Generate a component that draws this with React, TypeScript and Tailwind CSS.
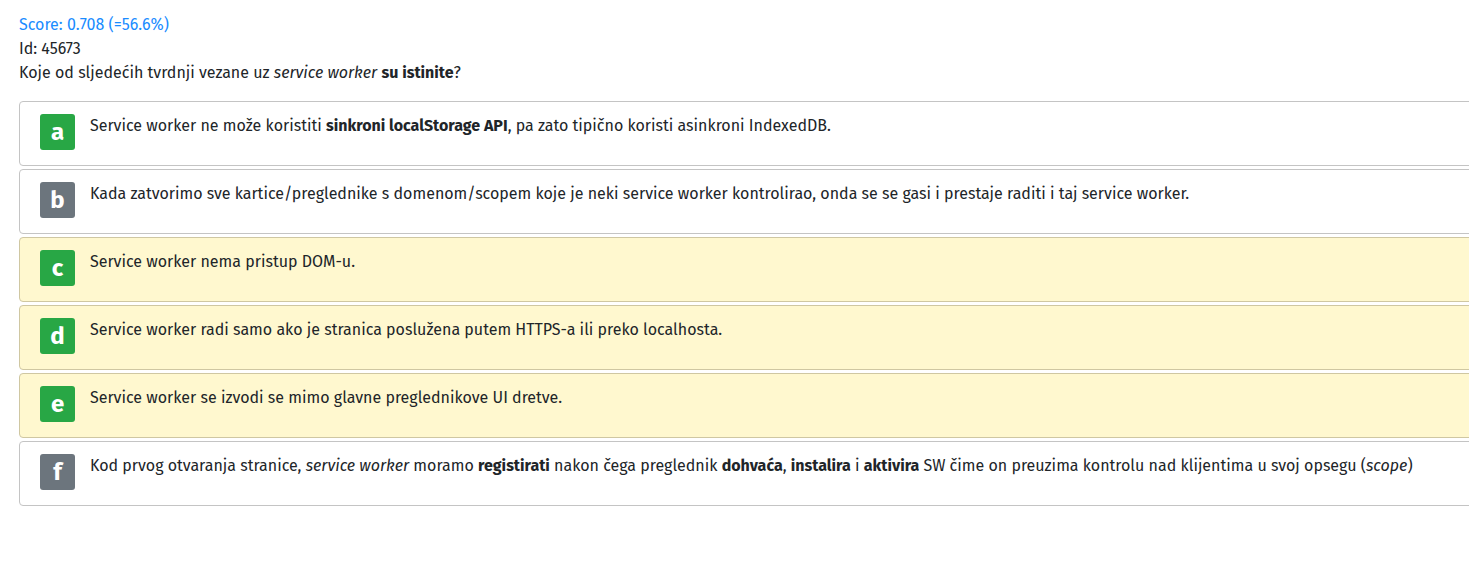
import type { ReactNode } from "react"

type Answer = {
    letter: string
    correct: boolean
    marked: boolean
    text: ReactNode
}

const answers: Answer[] = [
    {
        letter: "a",
        correct: true,
        marked: false,
        text: (
            <>
                Service worker ne može koristiti <b>sinkroni localStorage API</b>, pa zato tipično koristi asinkroni IndexedDB.
            </>
        ),
    },
    {
        letter: "b",
        correct: false,
        marked: false,
        text: (
            <>
                Kada zatvorimo sve kartice/preglednike s domenom/scopem koje je neki service worker kontrolirao, onda se se gasi i prestaje raditi i taj service worker.
            </>
        ),
    },
    { letter: "c", correct: true, marked: true, text: <>Service worker nema pristup DOM-u.</> },
    {
        letter: "d",
        correct: true,
        marked: true,
        text: <>Service worker radi samo ako je stranica poslužena putem HTTPS-a ili preko localhosta.</>,
    },
    {
        letter: "e",
        correct: true,
        marked: true,
        text: <>Service worker se izvodi se mimo glavne preglednikove UI dretve.</>,
    },
    {
        letter: "f",
        correct: false,
        marked: false,
        text: (
            <>
                Kod prvog otvaranja stranice, <i>service worker</i> moramo <b>registirati</b> nakon čega preglednik{" "}
                <b>dohvaća</b>, <b>instalira</b> i <b>aktivira</b> SW čime on preuzima kontrolu nad klijentima u svoj opsegu (
                <i>scope</i>)
            </>
        ),
    },
]

export default function App() {
    return (
        <div
            className="min-h-screen bg-white text-[#212529] overflow-hidden pt-[13px] pl-[19px] text-[16px] leading-6"
            style={{ fontFamily: '"Fira Sans", "Open Sans", sans-serif' }}
        >
            <div className="text-[#1a8cff]">Score: 0.708 (=56.6%)</div>
            <div>Id: 45673</div>
            <div>
                Koje od sljedećih tvrdnji vezane uz <i>service worker</i> <b>su istinite</b>?
            </div>

            <div className="mt-4 w-[1480px] flex flex-col gap-[3px]">
                {answers.map((a) => (
                    <div
                        key={a.letter}
                        className={`flex items-start gap-[15px] rounded border pl-[20px] pt-3 pb-[15px] ${
                            a.marked ? "bg-[#fff8cf] border-[#cfc7a2]" : "bg-white border-[#c4c4c4]"
                        }`}
                    >
                        <div
                            className={`w-[35px] h-[36px] shrink-0 rounded-[3px] flex items-center justify-center text-white font-bold text-[24px] leading-none ${
                                a.correct ? "bg-[#28a745]" : "bg-[#6c757d]"
                            }`}
                        >
                            {a.letter}
                        </div>
                        <div>{a.text}</div>
                    </div>
                ))}
            </div>
        </div>
    )
}
